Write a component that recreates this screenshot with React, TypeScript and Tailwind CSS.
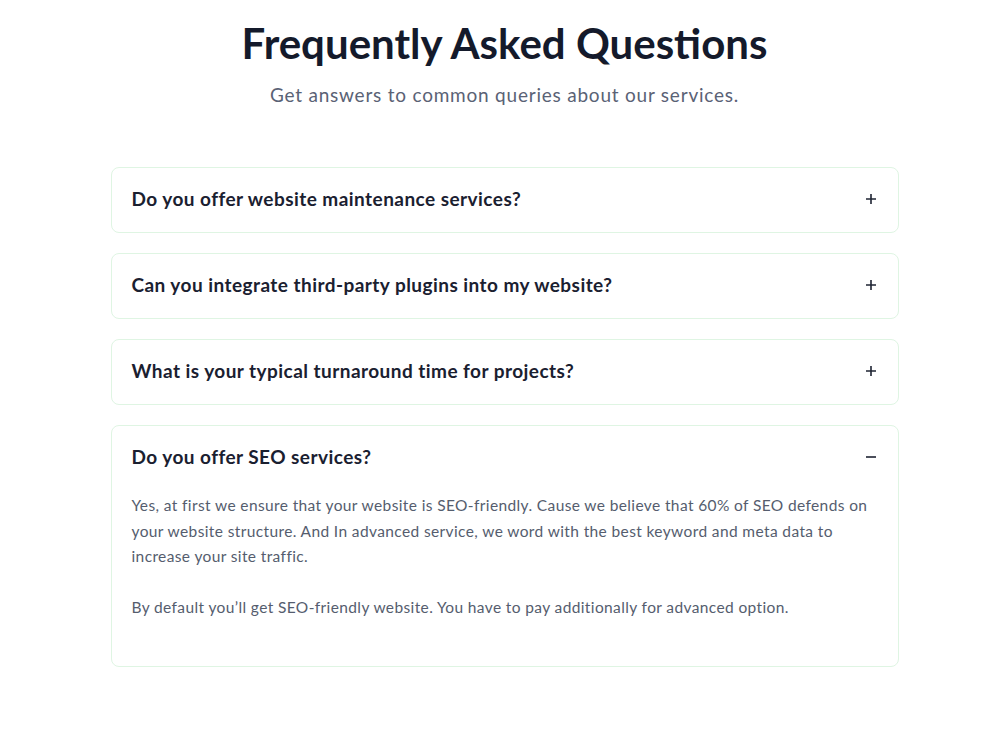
import React, { useState } from "react";

type Faq = { q: string; a: string[] };

const faqs: Faq[] = [
  { q: "Do you offer website maintenance services?", a: [] },
  { q: "Can you integrate third-party plugins into my website?", a: [] },
  { q: "What is your typical turnaround time for projects?", a: [] },
  {
    q: "Do you offer SEO services?",
    a: [
      "Yes, at first we ensure that your website is SEO-friendly. Cause we believe that 60% of SEO defends on your website structure. And In advanced service, we word with the best keyword and meta data to increase your site traffic.",
      "By default you\u2019ll get SEO-friendly website. You have to pay additionally for advanced option.",
    ],
  },
];

function PlusIcon() {
  return (
    <svg width="12" height="12" viewBox="0 0 12 12" className="text-[#1f2433]">
      <path d="M6 1v10M1 6h10" stroke="currentColor" strokeWidth="1.6" />
    </svg>
  );
}

function MinusIcon() {
  return (
    <svg width="12" height="12" viewBox="0 0 12 12" className="text-[#1f2433]">
      <path d="M1 6h10" stroke="currentColor" strokeWidth="1.6" />
    </svg>
  );
}

export default function App() {
  const [open, setOpen] = useState<number>(3);
  return (
    <div
      className="min-h-[750px] bg-white"
      style={{ fontFamily: "Lato, 'Noto Sans', sans-serif" }}
    >
      <section className="pt-[17px] pl-[9px]">
        <h1 className="text-center text-[42px] leading-[52px] font-bold text-[#141a2b]">
          Frequently Asked Questions
        </h1>
        <p className="mt-[12px] text-center text-[19px] leading-[28px] tracking-[0.78px] text-[#5a6275]">
          Get answers to common queries about our services.
        </p>
        <div className="mx-auto mt-[58px] flex w-[788px] flex-col gap-[20px]">
          {faqs.map((f, i) => {
            const isOpen = open === i;
            return (
              <div
                key={i}
                className="rounded-[8px] border border-[#dff5e3] bg-white"
              >
                <button
                  onClick={() => setOpen(isOpen ? -1 : i)}
                  className="flex w-full items-center justify-between px-[20px] pt-[17px] pb-[19px] text-left"
                >
                  <span className="text-[19px] leading-[28px] font-bold tracking-[0.45px] text-[#1a2030]">
                    {f.q}
                  </span>
                  <span className="mr-[1px] flex h-[28px] items-center">
                    {isOpen ? <MinusIcon /> : <PlusIcon />}
                  </span>
                </button>
                {isOpen && (
                  <div className="px-[20px] pt-[3px] pb-[19px] text-[15.5px] leading-[25.6px] tracking-[0.38px] text-[#555d6e]">
                    {f.a.map((t, j) => (
                      <p key={j} className="mb-[25.6px]">
                        {t}
                      </p>
                    ))}
                  </div>
                )}
              </div>
            );
          })}
        </div>
      </section>
    </div>
  );
}
